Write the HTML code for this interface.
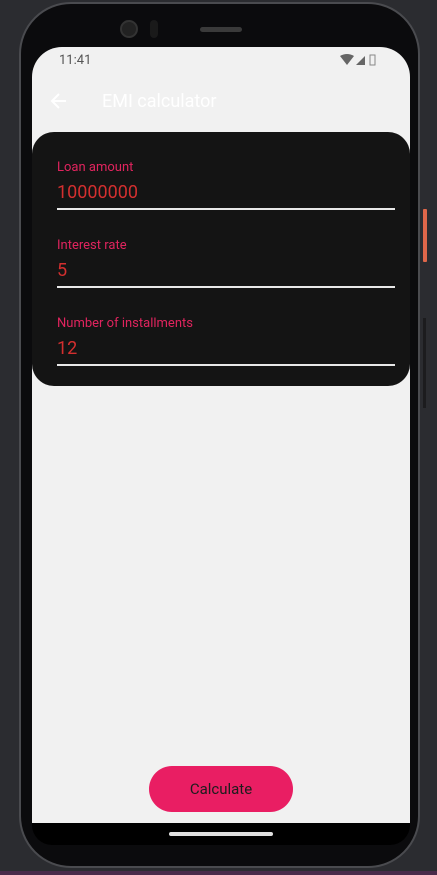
<!DOCTYPE html>
<html><head><style>
*{margin:0;padding:0;box-sizing:border-box}
body{width:437px;height:875px;background:#2b2c30;position:relative;overflow:hidden;font-family:"Roboto","Liberation Sans",sans-serif}
.phone{position:absolute;left:19px;top:2px;width:401px;height:866px;border-radius:52px;background:#0b0b0d;border:2px solid #4a4b4f}
.screen{position:absolute;left:32px;top:47px;width:378px;height:776px;background:#f1f1f1;border-radius:30px 30px 0 0;overflow:hidden}
.lbl{position:absolute;left:25px;font-size:13px;color:#e0245e}
.val{position:absolute;left:25px;font-size:18px;color:#d32f2f}
.ln{position:absolute;left:25px;width:338px;height:2px;background:#e8e8e8}
</style></head><body>
<div style="position:absolute;left:0;top:871px;width:437px;height:4px;background:#4a2a4a"></div>
<div style="position:absolute;left:423px;top:209px;width:4px;height:53px;background:#e0674a;border-radius:1px"></div>
<div style="position:absolute;left:423px;top:318px;width:3px;height:90px;background:#1c1c1e"></div>
<div class="phone"></div>
<div style="position:absolute;left:120px;top:20px;width:18px;height:18px;border-radius:50%;background:#222;border:2px solid #333"></div>
<div style="position:absolute;left:150px;top:20px;width:8px;height:18px;border-radius:4px;background:#1a1a1a"></div>
<div style="position:absolute;left:200px;top:27px;width:42px;height:5px;border-radius:3px;background:#3a3a3a"></div>
<div class="screen">
 <div style="position:absolute;left:27px;top:6px;font-size:13px;color:#555">11:41</div>
 <svg style="position:absolute;left:308px;top:7px" width="40" height="12" viewBox="0 0 40 12"><path d="M0 2 Q7 -2 14 2 L7 11Z" fill="#666"/><path d="M16 11 L25 2 L25 11Z" fill="#666"/><rect x="30" y="1" width="5" height="10" fill="none" stroke="#888"/></svg>
 <svg style="position:absolute;left:18px;top:45px" width="18" height="18" viewBox="0 0 18 18"><path d="M16 9H3M9 2L2 9l7 7" stroke="#fff" stroke-width="2" fill="none"/></svg>
 <div style="position:absolute;left:70px;top:44px;font-size:18px;color:#fff">EMI calculator</div>
 <div style="position:absolute;left:0;top:85px;width:378px;height:254px;background:#141414;border-radius:22px">
  <div class="lbl" style="top:28px">Loan amount</div>
  <div class="val" style="top:50px">10000000</div>
  <div class="ln" style="top:76px"></div>
  <div class="lbl" style="top:106px">Interest rate</div>
  <div class="val" style="top:128px">5</div>
  <div class="ln" style="top:154px"></div>
  <div class="lbl" style="top:184px">Number of installments</div>
  <div class="val" style="top:206px">12</div>
  <div class="ln" style="top:232px"></div>
 </div>
 <div style="position:absolute;left:117px;top:719px;width:144px;height:46px;border-radius:23px;background:#e91e63;color:#1d1d1d;font-size:15px;text-align:center;line-height:46px">Calculate</div>
</div>
<div style="position:absolute;left:32px;top:823px;width:378px;height:22px;background:#000;border-radius:0 0 20px 20px"></div>
<div style="position:absolute;left:169px;top:832px;width:104px;height:4px;border-radius:2px;background:#e0e0e0"></div>
</body></html>
